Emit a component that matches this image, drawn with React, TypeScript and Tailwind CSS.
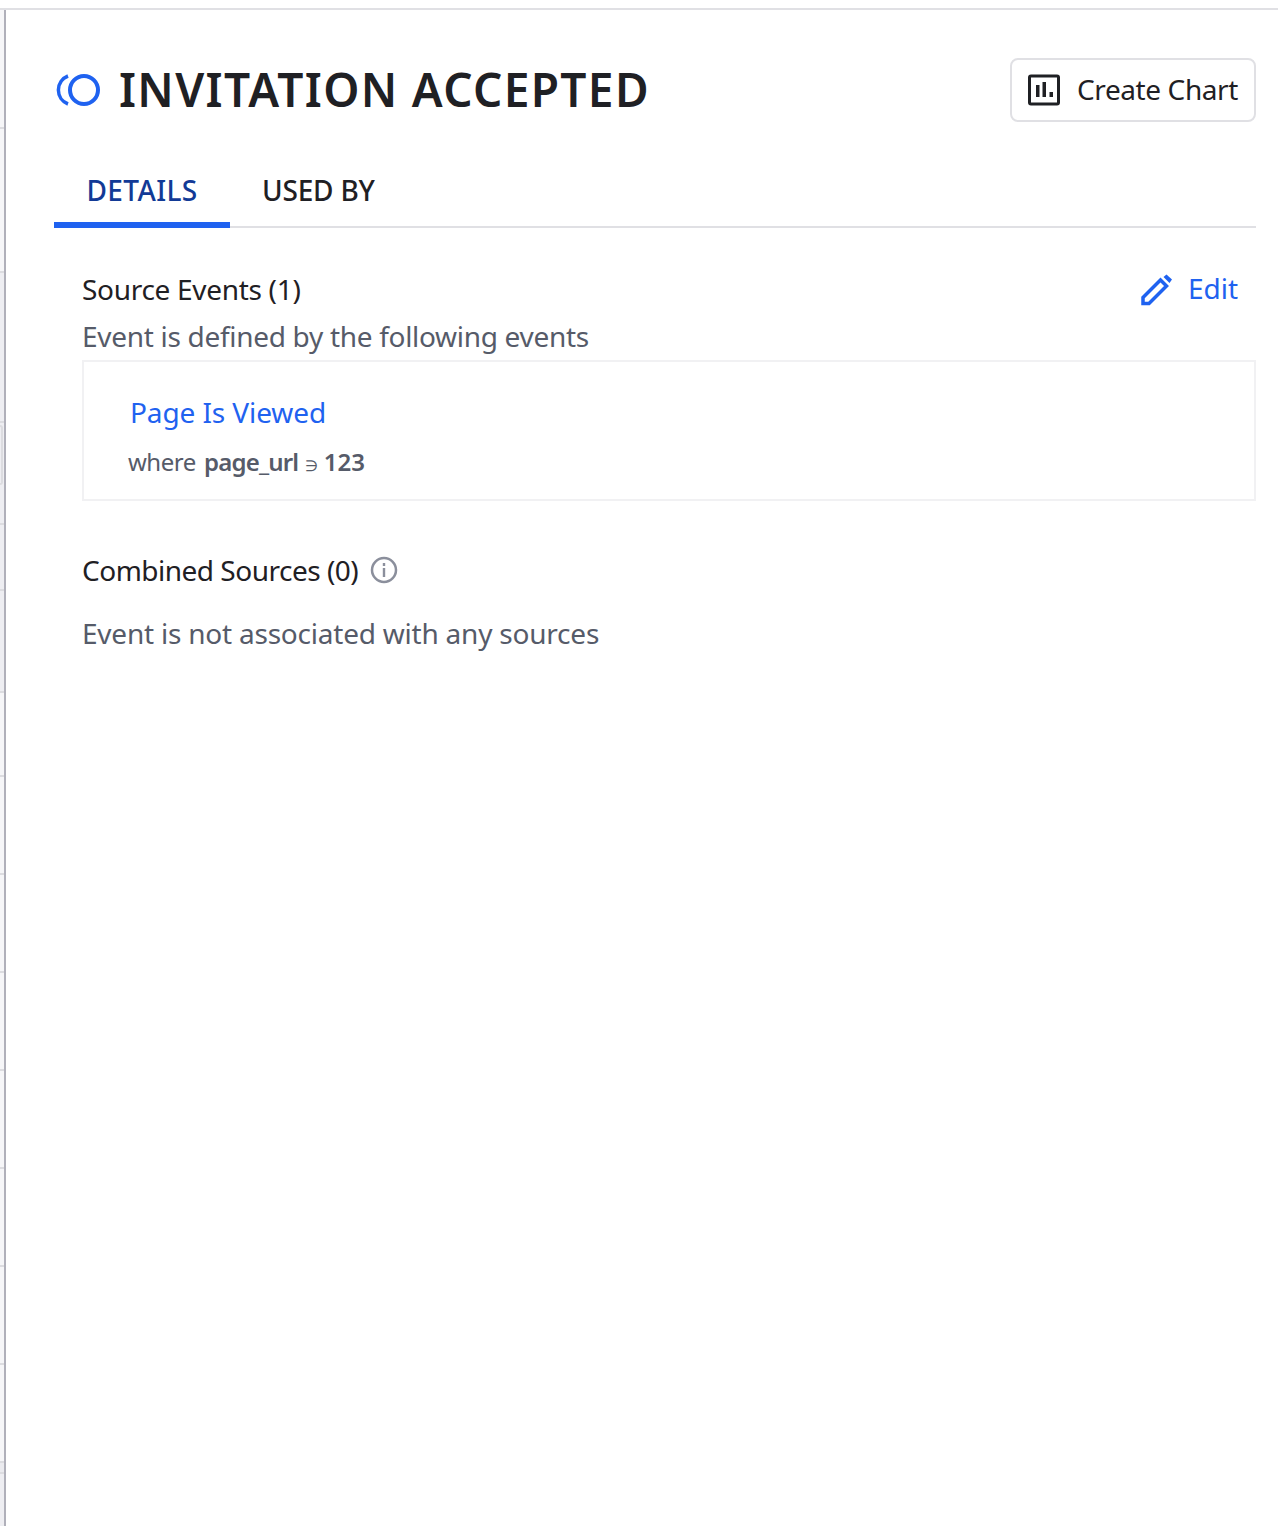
const segments = [{h:119,c:"bg-[#f6f6f8]"},{h:144,c:"bg-[#f6f6f8]"},{h:150,c:"bg-[#eeeef2]"},{h:102,c:"bg-[#eeeef2]"},{h:66,c:"bg-[#eeeef2]"},{h:102,c:"bg-[#eeeef2]"},{h:84,c:"bg-[#f6f6f8]"},{h:98,c:"bg-[#f6f6f8]"},{h:98,c:"bg-[#f6f6f8]"},{h:98,c:"bg-[#f6f6f8]"},{h:98,c:"bg-[#f6f6f8]"},{h:98,c:"bg-[#f6f6f8]"},{h:98,c:"bg-[#f6f6f8]"},{h:98,c:"bg-[#f6f6f8]"},{h:11,c:"bg-[#ebebef]"}];

function Strip() {
  return (
    <div className="relative w-[4px] shrink-0 flex flex-col bg-[#eeeef2]">
      {segments.map((s, i) => (
        <div key={i} className={`${s.c} border-b-2 border-[#dcdce0]`} style={{ height: s.h }} />
      ))}
      <div className="absolute left-0 top-[415px] h-[60px] w-[3px] rounded-r-[3px] border-2 border-l-0 border-[#dcdce0]" />
    </div>
  );
}

export default function App() {
  return (
    <div className="h-[1526px] w-[1278px] overflow-hidden bg-white font-['Noto_Sans',sans-serif] flex flex-col">
      <div className="h-[8px] bg-white" />
      <div className="h-[2px] bg-[#e0e0e4]" />
      <div className="flex flex-1 min-h-0">
        <Strip />
        <div className="w-[2px] shrink-0 bg-[#b0b0ba]" />
        <main className="flex-1 pl-[48px] pr-[22px]">
          <header className="flex items-start justify-between pt-[48px] h-[134px]">
            <div className="flex items-center h-[62px]">
              <svg width="46" height="34" viewBox="0 0 46 34" className="mr-[19px]">
                <circle cx="30" cy="18" r="14" fill="none" stroke="#1f62f0" strokeWidth="4" />
                <path d="M 14 4 A 15 15 0 0 0 14 32" fill="none" stroke="#1f62f0" strokeWidth="3.5" />
              </svg>
              <h1 className="text-[46px] leading-[62px] font-semibold text-[#1f2024] tracking-[1.35px] whitespace-nowrap">INVITATION ACCEPTED</h1>
            </div>
            <button className="flex items-center h-[64px] w-[246px] rounded-[8px] border-2 border-[#e0e0e4] pl-[16px] text-[#1f2024]">
              <svg width="32" height="32" viewBox="0 0 32 32" className="mr-[17px]">
                <rect x="1.5" y="2" width="29" height="28" rx="1.5" fill="none" stroke="#1f2024" strokeWidth="3" />
                <rect x="8" y="11" width="3.5" height="12" fill="#1f2024" />
                <rect x="14.5" y="8" width="3.5" height="15" fill="#1f2024" />
                <rect x="21.5" y="18" width="3.5" height="5" fill="#1f2024" />
              </svg>
              <span className="text-[28px] leading-[36px] tracking-[-0.4px] whitespace-nowrap -mt-[2px]">Create Chart</span>
            </button>
          </header>

          <nav className="flex h-[60px] border-b-2 border-[#e0e0e4] mt-[24px]">
            <div className="w-[176px] h-[60px] border-b-[6px] border-[#1f62f0] flex justify-center pt-[4px] text-[#123a96] text-[28px] leading-[36px] font-medium tracking-[0.4px] whitespace-nowrap">DETAILS</div>
            <div className="pl-[32px] pt-[4px] text-[#1f2024] text-[28px] leading-[36px] font-medium tracking-[-0.2px] whitespace-nowrap">USED BY</div>
          </nav>

          <section className="pl-[28px]">
            <div className="flex items-center justify-between pt-[41px] h-[81px] pr-[18px]">
              <div className="text-[28px] leading-[36px] tracking-[-0.3px] text-[#1f2024] whitespace-nowrap">Source Events (1)</div>
              <div className="flex items-center text-[#1f62f0]">
                <svg width="32" height="32" viewBox="0 0 32 32" className="mr-[16px] mt-[1px]">
                  <path d="M3 29.5v-6L20.5 6l6 6L9 29.5Z" fill="none" stroke="#1f62f0" strokeWidth="3.5" />
                  <path d="M23.5 3 26.5 0.5 32 5.5 29.5 9Z" fill="#1f62f0" />
                </svg>
                <span className="text-[28px] leading-[36px] -mt-[2px]">Edit</span>
              </div>
            </div>
            <p className="text-[28px] leading-[40px] tracking-[-0.3px] text-[#565b69] whitespace-nowrap mt-[7px]">Event is defined by the following events</p>
            <div className="h-[141px] mt-[4px] border-2 border-[#f1f1f3] pl-[44px]">
              <div className="pt-[30px] pl-[2px] text-[28px] leading-[40px] tracking-[-0.1px] text-[#1f62f0] whitespace-nowrap">Page Is Viewed</div>
              <div className="mt-[14px] text-[24px] leading-[32px] text-[#565b69] whitespace-nowrap">
                <span className="tracking-[-0.5px]">where</span> <span className="font-semibold tracking-[-0.8px] ml-[2px]">page_url</span> <span className="text-[15px]">∋</span> <span className="font-semibold">123</span>
              </div>
            </div>
            <div className="flex items-center mt-[49px] h-[40px]">
              <span className="text-[28px] leading-[40px] tracking-[-0.5px] text-[#1f2024] whitespace-nowrap">Combined Sources (0)</span>
              <svg width="28" height="28" viewBox="0 0 28 28" className="ml-[12px]">
                <circle cx="14" cy="14" r="12" fill="none" stroke="#8b8f9c" strokeWidth="2.5" />
                <rect x="12.8" y="12" width="2.4" height="9" fill="#8b8f9c" />
                <rect x="12.8" y="7" width="2.4" height="3" fill="#8b8f9c" />
              </svg>
            </div>
            <p className="mt-[23px] text-[28px] leading-[40px] tracking-[-0.22px] text-[#565b69] whitespace-nowrap">Event is not associated with any sources</p>
          </section>
        </main>
      </div>
    </div>
  );
}
